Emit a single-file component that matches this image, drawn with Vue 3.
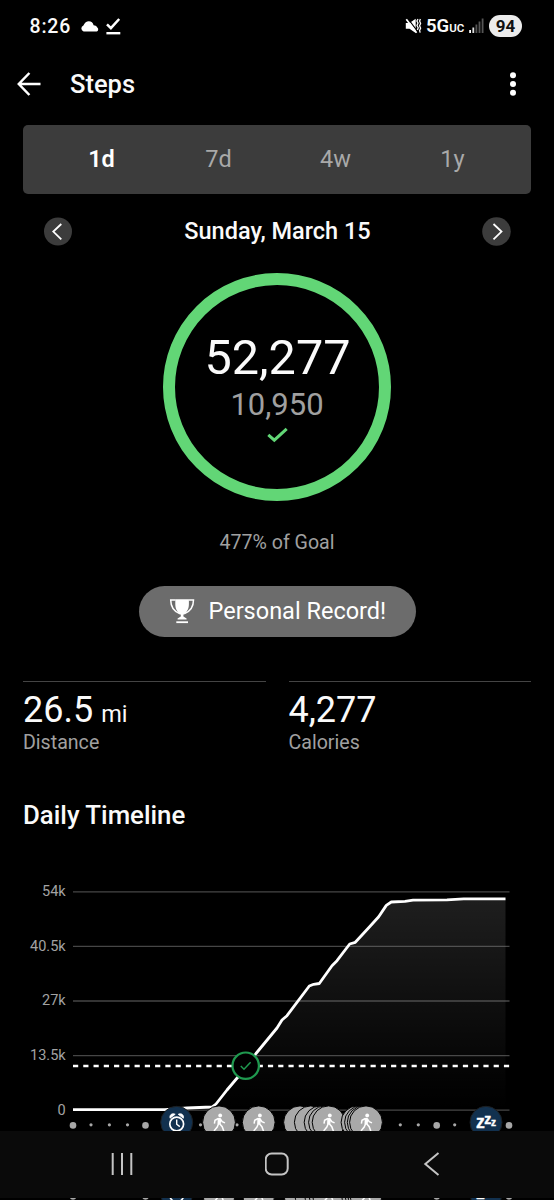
<script setup>
const tabs = ['1d', '7d', '4w', '1y']

const stats = [
  { value: '26.5', unit: 'mi', label: 'Distance' },
  { value: '4,277', unit: '', label: 'Calories' },
]

const gridLines = [
  { label: '54k', y: 891.8 },
  { label: '40.5k', y: 946.4 },
  { label: '27k', y: 1001 },
  { label: '13.5k', y: 1055.6 },
  { label: '0', y: 1110.2 },
]

const curve =
  '73,1109.7 165,1109.7 187,1108 212,1107 216,1104 227,1090 238,1077 256,1053.5 277,1028 282,1020 287,1015.7 ' +
  '309.3,986 313.7,984.3 319.3,983.5 332,965.7 337,960.7 349.7,944 355.3,942.3 368.7,927.7 378.7,916.7 ' +
  '386.3,905.4 391.3,902 405,901.3 413,900.2 447,899.8 463.7,898.8 505.5,898.8'

const bigDots = [73, 145.5, 436.7, 509]
const smallDots = [91, 109.4, 127.5, 200.5, 237, 400.3, 418.3, 454.7]
const walks = [
  { x: 219, icon: true },
  { x: 258.7, icon: true },
  { x: 300, icon: false },
  { x: 310.8, icon: false },
  { x: 320.6, icon: false },
  { x: 325, icon: false },
  { x: 328.6, icon: true },
  { x: 357.5, icon: false },
  { x: 361, icon: false },
  { x: 363.7, icon: false },
  { x: 366, icon: true },
]
</script>

<template>
  <div class="screen">
    <div class="status">
      <span class="clock">8:26</span>
      <svg class="cloud" width="19" height="11" viewBox="0 0 19 11">
        <path d="M3.6 10.5A3.1 3.1 0 0 1 3.4 4.6 C4.6 1.8 6.6.3 8.8.3 C11.4.3 13 1.900 13.600 4.200 C15 4.300 16.600 5 17.300 6.500 A2.300 2.300 0 0 1 16.700 10.500Z" fill="#fff" />
      </svg>
      <svg width="15" height="18" viewBox="0 0 15 18">
        <path d="M1 7.300L4.900 11.200L13.200 2" fill="none" stroke="#fff" stroke-width="2.500" />
        <path d="M.4 16.200H14.300" stroke="#fff" stroke-width="2.400" />
      </svg>
      <span class="spacer"></span>
      <svg class="mute" width="17" height="16" viewBox="0 0 17 16">
        <path d="M.8 5.100H4.500L10.700 .8V15L4.500 10.700H.8Z" fill="#fff" />
        <path d="M2.600 .2L13.400 14.600" stroke="#000" stroke-width="1.200" />
        <path d="M1.300 1.300L11.600 14.800" stroke="#fff" stroke-width="1.700" />
        <path d="M13 1L11.900 3L13 5L12 7.500L13.200 9.800L12.400 12M15.400 1L14.600 3L15.600 5.400L14.600 7.800L15.600 10.200L14.600 12.600L15.200 14.600" fill="none" stroke="#fff" stroke-width="1.300" />
      </svg>
      <span class="net">5G<small>UC</small></span>
      <svg class="signal" width="15" height="16" viewBox="0 0 15 16">
        <path d="M1.100 12V15" stroke="#fff" stroke-width="1.800" />
        <path d="M4.300 9.500V15" stroke="#ddd" stroke-width="1.800" />
        <path d="M7.400 6.500V15M10.500 3.500V15M13.600 .5V15" stroke="#555" stroke-width="1.800" />
      </svg>
      <span class="battery">94</span>
    </div>

    <header class="appbar">
      <svg width="24" height="24" viewBox="0 0 24 24">
        <path d="M12.400 1L1.800 12L12.400 23M1.800 12H23.500" fill="none" stroke="#fff" stroke-width="2.500" />
      </svg>
      <h1>Steps</h1>
      <svg class="more" width="8" height="26" viewBox="0 0 8 26">
        <circle cx="4" cy="4.200" r="3" fill="#fff" />
        <circle cx="4" cy="13" r="3" fill="#fff" />
        <circle cx="4" cy="21.800" r="3" fill="#fff" />
      </svg>
    </header>

    <nav class="tabs">
      <span v-for="(t, i) in tabs" :key="t" :class="{ active: i === 0 }">{{ t }}</span>
    </nav>

    <div class="date">
      <svg width="29" height="29" viewBox="0 0 29 29">
        <circle cx="14" cy="14.500" r="14" fill="#3c3c3c" />
        <path d="M17.300 7L9.300 14.600L17.300 22.300" fill="none" stroke="#fff" stroke-width="1.800" />
      </svg>
      <span>Sunday, March 15</span>
      <svg width="29" height="29" viewBox="0 0 29 29">
        <circle cx="14.500" cy="14.500" r="14.300" fill="#3c3c3c" />
        <path d="M11.500 7L19.500 14.600L11.500 22.300" fill="none" stroke="#fff" stroke-width="1.800" />
      </svg>
    </div>

    <div class="ring">
      <span class="count">52,277</span>
      <span class="target">10,950</span>
      <svg width="21" height="16" viewBox="0 0 21 16">
        <path d="M1.300 7.800L7.300 13.200L19.700 1.800" fill="none" stroke="#62d676" stroke-width="3" />
      </svg>
    </div>

    <p class="goal">477% of Goal</p>

    <div class="record">
      <svg width="26" height="26" viewBox="0 0 26 26">
        <path d="M6.300 1.200H19.900V6C19.900 11.500 17.500 14.500 14.400 16.800V18.500L17.600 20.400V21.500H8.600V20.400L11.800 18.500V16.800C8.700 14.500 6.300 11.500 6.300 6Z" fill="#fff" />
        <path d="M6.500 2H1.700C1.700 8 5 13.500 11 15.800M19.700 2H24.500C24.500 8 21.200 13.500 15.200 15.800" fill="none" stroke="#fff" stroke-width="1.500" />
        <path d="M7.300 24.200H19" stroke="#fff" stroke-width="1.800" />
      </svg>
      <span>Personal Record!</span>
    </div>

    <section class="stats">
      <div v-for="s in stats" :key="s.label" class="stat">
        <div class="value">{{ s.value }}<small v-if="s.unit">{{ s.unit }}</small></div>
        <div class="label">{{ s.label }}</div>
      </div>
    </section>

    <h2>Daily Timeline</h2>

    <svg class="chart" width="554" height="291" viewBox="0 840 554 291">
      <defs>
        <linearGradient id="area" x1="0" y1="898" x2="0" y2="1110" gradientUnits="userSpaceOnUse">
          <stop offset="0" stop-color="#fff" stop-opacity="0.12" />
          <stop offset="0.85" stop-color="#fff" stop-opacity="0.015" />
          <stop offset="1" stop-color="#fff" stop-opacity="0" />
        </linearGradient>
        <g id="walker">
          <circle cx="1.200" cy="-6.900" r="1.900" />
          <path d="M-1.300 -4.300L1.500 -4.500L2.200 -2L1.600 2L-1.500 2Z" />
          <path d="M-.6 -3.800L-4 -2L-4.600 1.400M1.200 -3.600L3.200 -.6L6 .6M-.4 1.500L-1.800 4.800L-5 8.600M.7 1.500L3.200 4.400L4.800 8.800" fill="none" stroke="#fff" stroke-width="1.500" />
        </g>
      </defs>

      <polygon :points="curve + ' 505.5,1110 73,1110'" fill="url(#area)" />
      <g v-for="g in gridLines" :key="g.label">
        <path :d="`M73 ${g.y}H509.500`" stroke="#8c8c8c" stroke-opacity="0.5" stroke-width="1.300" />
        <text class="axis" x="65.700" :y="g.y + 4.400" text-anchor="end">{{ g.label }}</text>
      </g>
      <polyline :points="curve" fill="none" stroke="#fff" stroke-width="2.800" stroke-linejoin="round" />
      <path d="M73 1066H509.500" stroke="#fff" stroke-width="2.500" stroke-dasharray="5.200 5.060" />
      <circle cx="245.700" cy="1065.700" r="13.200" fill="#000" stroke="#1f994f" stroke-width="2.200" />
      <path d="M240.800 1066L244 1069.200L250.600 1062.200" fill="none" stroke="#1f994f" stroke-width="1.500" />

      <g id="events">
        <circle v-for="x in bigDots" :key="x" :cx="x" cy="1125.400" r="3.300" fill="#a8a8a8" />
        <circle v-for="x in smallDots" :key="x" :cx="x" cy="1124.800" r="1.600" fill="#a8a8a8" />

        <circle cx="176.700" cy="1122.300" r="16" fill="#12314f" stroke="#1c1f22" stroke-width="1" />
        <g fill="none" stroke="#fff">
          <circle cx="176.700" cy="1124" r="6.900" stroke-width="1.700" />
          <path d="M176.700 1119.500V1124.200L179.800 1126.600" stroke-width="1.400" />
          <path d="M170 1118.200C169.300 1114.800 172 1112.800 175.200 1114.300ZM183.400 1118.200C184.100 1114.800 181.400 1112.800 178.200 1114.300Z" fill="#fff" stroke-width=".8" />
        </g>

        <g v-for="w in walks" :key="w.x" :transform="`translate(${w.x} 1122.300)`">
          <circle r="16.400" fill="#a9a9a9" stroke="#000" stroke-width="1" />
          <use v-if="w.icon" href="#walker" fill="#fff" />
        </g>

        <circle cx="486" cy="1122.300" r="16" fill="#12314f" stroke="#1c1f22" stroke-width="1" />
        <text class="zzz" y="1127.600"><tspan x="476" font-size="17.500">z</tspan><tspan x="484.300" y="1124" font-size="14">z</tspan><tspan x="491" y="1125.900" font-size="10">z</tspan></text>
      </g>
    </svg>

    <footer class="sysnav">
      <svg width="24" height="24" viewBox="0 0 24 24">
        <path d="M2.700 1V23M12 1V23M21.300 1V23" stroke="#c4c4c4" stroke-width="2" />
      </svg>
      <svg width="24" height="24" viewBox="0 0 24 24">
        <rect x=".7" y="1.500" width="22" height="21" rx="6" fill="none" stroke="#c4c4c4" stroke-width="2" />
      </svg>
      <svg width="24" height="24" viewBox="0 0 24 24">
        <path d="M18.500 1L5.300 12L18.500 23" fill="none" stroke="#c4c4c4" stroke-width="2" />
      </svg>
    </footer>
    <svg class="edge" width="554" height="2" viewBox="0 1127 554 2">
      <use href="#events" />
    </svg>
  </div>
</template>

<style>
body {
  background: #000;
}
</style>

<style scoped>
.screen {
  width: 554px;
  height: 1200px;
  overflow: hidden;
  background: #000;
  color: #fafafa;
  font-family: Roboto, sans-serif;
  display: flex;
  flex-direction: column;
}
.screen > * {
  flex-shrink: 0;
}
svg {
  display: block;
  flex-shrink: 0;
}
.status {
  height: 52px;
  padding: 0 32px 0 29.5px;
  display: flex;
  align-items: center;
}
.clock {
  width: 50.5px;
  font-size: 19.5px;
  font-weight: 500;
  letter-spacing: 0.8px;
}
.cloud {
  margin-right: 7px;
}
.spacer {
  flex: 1;
}
.mute {
  margin-right: 4px;
}
.net {
  width: 43px;
  padding-top: 1px;
  font-size: 18.5px;
  font-weight: 600;
  line-height: 24px;
  white-space: nowrap;
}
.net small {
  font-size: 11.5px;
  font-weight: 600;
}
.signal {
  margin-right: 5px;
}
.battery {
  width: 33px;
  height: 22px;
  border-radius: 11px;
  background: #ececec;
  color: #111;
  font-size: 17px;
  font-weight: 700;
  line-height: 22px;
  text-align: center;
}
.appbar {
  height: 64px;
  padding: 0 37px 0 17px;
  display: flex;
  align-items: center;
}
h1 {
  margin: 0 auto 0 29px;
  font-size: 25.5px;
  font-weight: 500;
}
.tabs {
  height: 69px;
  box-sizing: border-box;
  margin: 9px 23px 0;
  padding: 0 20px 2px;
  border-radius: 5px;
  background: #3c3c3c;
  display: grid;
  grid-template-columns: repeat(4, 1fr);
  align-items: center;
  text-align: center;
  font-size: 23.5px;
  color: #a9a9a9;
}
.tabs .active {
  color: #fff;
  font-weight: 600;
}
.date {
  height: 74px;
  padding: 0 43px 0 44px;
  display: flex;
  align-items: center;
  justify-content: space-between;
  font-size: 23.5px;
  font-weight: 500;
}
.ring {
  width: 204px;
  height: 204px;
  margin: 5px auto 0;
  border: 12px solid #62d676;
  border-radius: 50%;
  display: flex;
  flex-direction: column;
  align-items: center;
}
.count {
  margin-top: 46px;
  padding-left: 1px;
  font-size: 48.6px;
  line-height: 54px;
}
.target {
  margin-top: 8px;
  font-size: 31px;
  line-height: 24px;
  color: #a0a0a0;
}
.ring svg {
  margin-top: 10px;
  margin-left: 1px;
}
.goal {
  margin: 27px 0 0;
  height: 29px;
  font-size: 19.6px;
  line-height: 30px;
  text-align: center;
  color: #a0a0a0;
}
.record {
  align-self: center;
  box-sizing: border-box;
  width: 277px;
  height: 51px;
  margin-top: 28.5px;
  padding-left: 30px;
  border-radius: 26px;
  background: #6c6c6c;
  color: #fff;
  display: flex;
  align-items: center;
  gap: 14px;
  font-size: 23.5px;
  white-space: nowrap;
}
.stats {
  margin: 44px 23px 0;
  display: grid;
  grid-template-columns: 1fr 1fr;
  gap: 23px;
}
.stat {
  height: 73px;
  border-top: 1px solid #444;
}
.value {
  margin-top: 7px;
  height: 42px;
  font-size: 36px;
  line-height: 42px;
}
.value small {
  margin-left: 8px;
  font-size: 23.5px;
  line-height: 1;
}
.label {
  font-size: 19.6px;
  line-height: 24px;
  color: #a0a0a0;
}
h2 {
  margin: 45.5px 23px 0;
  height: 29.5px;
  font-size: 25.8px;
  line-height: 30px;
  font-weight: 500;
}
.chart {
  margin-top: 10px;
}
.axis {
  font-size: 14.5px;
  fill: #a3a3a3;
}
.zzz {
  font-family: "Liberation Sans", sans-serif;
  font-weight: 700;
  fill: #fff;
  stroke: #fff;
  stroke-width: 0.4px;
}
.sysnav {
  height: 67px;
  padding: 0 44.5px;
  background: #0a0a0a;
  display: grid;
  grid-template-columns: repeat(3, 1fr);
  align-items: center;
  justify-items: center;
}
</style>
